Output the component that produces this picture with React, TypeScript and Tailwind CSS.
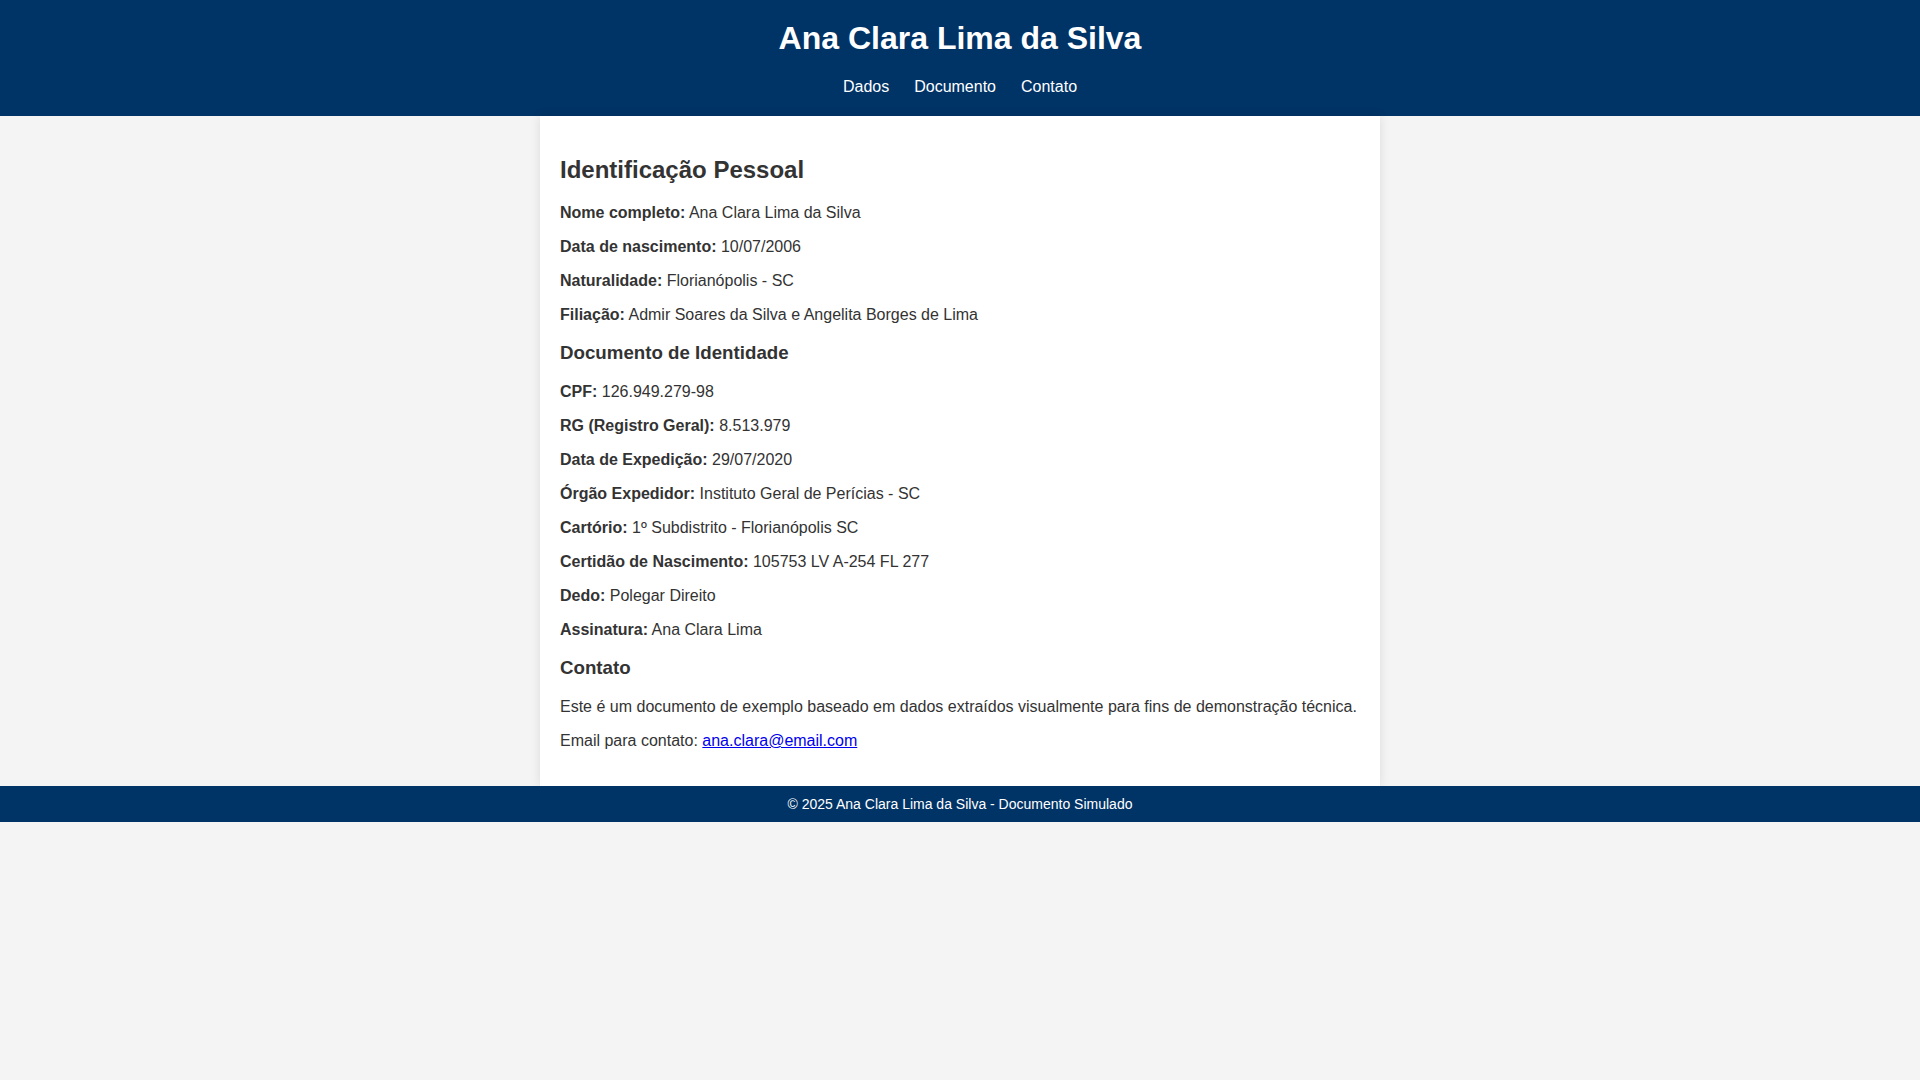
import React from "react";

type Field = { label: string; value: string };

const pessoais: Field[] = [
  { label: "Nome completo:", value: "Ana Clara Lima da Silva" },
  { label: "Data de nascimento:", value: "10/07/2006" },
  { label: "Naturalidade:", value: "Florianópolis - SC" },
  { label: "Filiação:", value: "Admir Soares da Silva e Angelita Borges de Lima" },
];

const documento: Field[] = [
  { label: "CPF:", value: "126.949.279-98" },
  { label: "RG (Registro Geral):", value: "8.513.979" },
  { label: "Data de Expedição:", value: "29/07/2020" },
  { label: "Órgão Expedidor:", value: "Instituto Geral de Perícias - SC" },
  { label: "Cartório:", value: "1º Subdistrito - Florianópolis SC" },
  { label: "Certidão de Nascimento:", value: "105753 LV A-254 FL 277" },
  { label: "Dedo:", value: "Polegar Direito" },
  { label: "Assinatura:", value: "Ana Clara Lima" },
];

function Row({ label, value }: Field) {
  return (
    <p className="my-4">
      <strong className="font-bold">{label}</strong> {value}
    </p>
  );
}

export default function App() {
  return (
    <div className="min-h-screen bg-[#f4f4f4] text-[#333] text-base leading-[18px] font-['Liberation_Sans',Arial,sans-serif]">
      <header className="bg-[#003366] text-white text-center pt-5 pb-5 px-5">
        <h1 className="text-[32px] font-bold leading-[37px] mb-[21px]">
          Ana Clara Lima da Silva
        </h1>
        <nav className="flex justify-center gap-[25px] leading-[18.4px]">
          <a href="#dados" className="text-white">Dados</a>
          <a href="#documento" className="text-white">Documento</a>
          <a href="#contato" className="text-white">Contato</a>
        </nav>
      </header>

      <main className="max-w-[840px] mx-auto bg-white p-5 shadow-[0_0_10px_rgba(0,0,0,0.1)]">
        <section id="dados">
          <h2 className="text-[24px] font-bold leading-[27px] mt-[19.92px] mb-[20.4px]">
            Identificação Pessoal
          </h2>
          {pessoais.map((f) => (
            <Row key={f.label} {...f} />
          ))}
        </section>

        <section id="documento">
          <h3 className="text-[18.72px] font-bold leading-[21px] mt-[18.72px] mb-[20px]">
            Documento de Identidade
          </h3>
          {documento.map((f) => (
            <Row key={f.label} {...f} />
          ))}
        </section>

        <section id="contato">
          <h3 className="text-[18.72px] font-bold leading-[21px] mt-[18px] mb-[19.5px]">
            Contato
          </h3>
          <p className="my-4">
            Este é um documento de exemplo baseado em dados extraídos visualmente para fins de demonstração técnica.
          </p>
          <p className="my-4">
            Email para contato:{" "}
            <a href="mailto:ana.clara@email.com" className="text-[#0000ee] underline">
              ana.clara@email.com
            </a>
          </p>
        </section>
      </main>

      <footer className="bg-[#003366] text-white text-center text-[14px] leading-4 py-2.5">
        © 2025 Ana Clara Lima da Silva - Documento Simulado
      </footer>
    </div>
  );
}
